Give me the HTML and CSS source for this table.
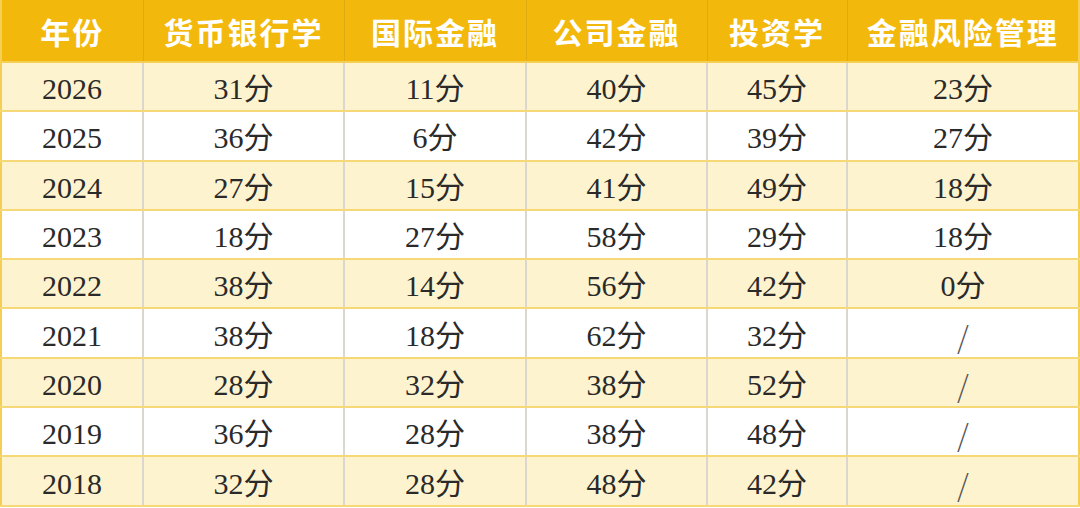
FILE: index.html
```html
<!DOCTYPE html>
<html lang="zh-CN">
<head>
<meta charset="utf-8">
<title>分数表</title>
<link rel="stylesheet" href="styles.css">
</head>
<body>
<table class="scores">
  <colgroup>
    <col class="c1"><col class="c2"><col class="c3"><col class="c4"><col class="c5"><col class="c6">
  </colgroup>
  <thead>
    <tr><th>年份</th><th>货币银行学</th><th>国际金融</th><th>公司金融</th><th>投资学</th><th>金融风险管理</th></tr>
  </thead>
  <tbody>
    <tr class="alt"><td>2026</td><td>31分</td><td>11分</td><td>40分</td><td>45分</td><td>23分</td></tr>
    <tr><td>2025</td><td>36分</td><td>6分</td><td>42分</td><td>39分</td><td>27分</td></tr>
    <tr class="alt"><td>2024</td><td>27分</td><td>15分</td><td>41分</td><td>49分</td><td>18分</td></tr>
    <tr><td>2023</td><td>18分</td><td>27分</td><td>58分</td><td>29分</td><td>18分</td></tr>
    <tr class="alt"><td>2022</td><td>38分</td><td>14分</td><td>56分</td><td>42分</td><td>0分</td></tr>
    <tr><td>2021</td><td>38分</td><td>18分</td><td>62分</td><td>32分</td><td class="slash">/</td></tr>
    <tr class="alt"><td>2020</td><td>28分</td><td>32分</td><td>38分</td><td>52分</td><td class="slash">/</td></tr>
    <tr><td>2019</td><td>36分</td><td>28分</td><td>38分</td><td>48分</td><td class="slash">/</td></tr>
    <tr class="alt"><td>2018</td><td>32分</td><td>28分</td><td>48分</td><td>42分</td><td class="slash">/</td></tr>
  </tbody>
</table>
</body>
</html>
```

FILE: styles.css
```css
html, body {
  margin: 0;
  padding: 0;
  background: #ffffff;
}

.scores {
  width: 1078px;
  border-collapse: collapse;
  table-layout: fixed;
  border-left: 2px solid #F5CF55;
  border-right: 2px solid #F5CF55;
  border-bottom: 2px solid #F5CF55;
}

.c1 { width: 142px; }
.c2 { width: 201px; }
.c3 { width: 182px; }
.c4 { width: 181px; }
.c5 { width: 140px; }
.c6 { width: 232px; }

.scores th {
  height: 61px;
  padding: 0;
  background: #F3B80C;
  color: #ffffff;
  font-family: "Noto Sans CJK SC", sans-serif;
  font-weight: 700;
  font-size: 30px;
  line-height: 30px;
  letter-spacing: 2px;
  text-align: center;
  border-left: 1px solid #E2AA12;
  border-bottom: 2px solid #F5CF55;
}

.scores th:first-child {
  border-left: none;
}

.scores td {
  height: 42.3px;
  padding: 5px 0 0;
  text-align: center;
  color: #2a2a2a;
  font-family: "Liberation Serif", "Noto Sans CJK SC", serif;
  font-size: 30px;
  line-height: 30px;
  border-left: 2px solid #DAD7D0;
  border-bottom: 2px solid #F7D877;
}

.scores td:first-child {
  border-left: none;
}

.scores tr.alt td {
  background: #FEF3CF;
}

.scores td.slash {
  color: #555555;
  font-family: "Noto Sans CJK SC", sans-serif;
  font-weight: 300;
}
```
